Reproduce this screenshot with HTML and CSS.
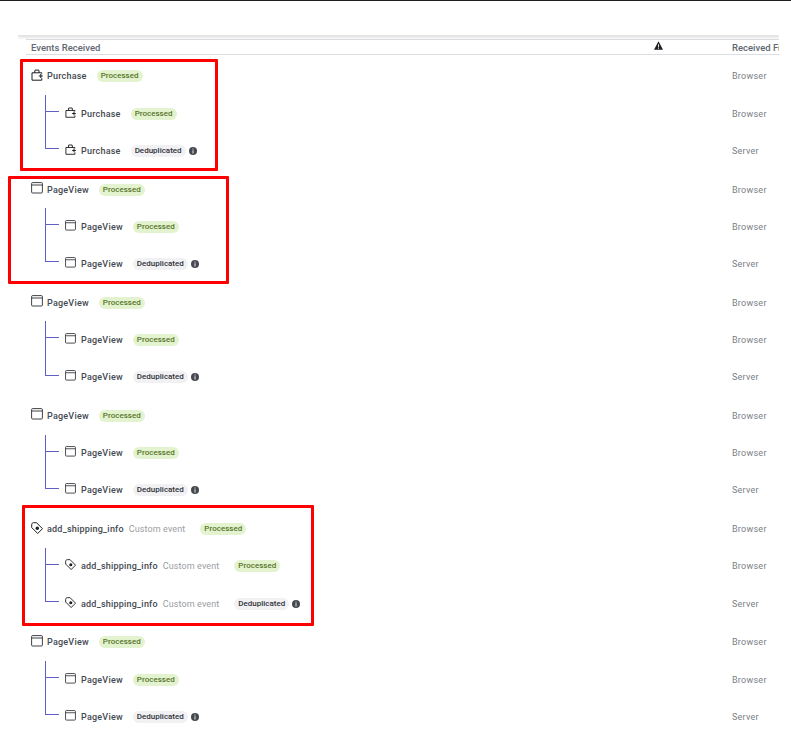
FILE: index.html
```html
<!DOCTYPE html>
<html lang="en">
<head>
<meta charset="utf-8">
<title>Events Received</title>
<link rel="stylesheet" href="styles.css">
</head>
<body>
<svg class="defs" width="0" height="0" aria-hidden="true">
  <defs>
    <symbol id="bag" viewBox="0 0 12 12">
      <path d="M1 3.800h9.800v7.400H1zM3.600 3.800 4 1.100h3.800l.4 2.700" fill="none" stroke="#1c1e21" stroke-width="1"/>
      <rect x="7.600" y="4.800" width="4.400" height="4.400" fill="#fff"/>
      <path d="M7.800 7h4M9.800 5v4" stroke="#1c1e21" stroke-width="1.100"/>
    </symbol>
    <symbol id="page" viewBox="0 0 12 12">
      <rect x=".6" y=".6" width="10.800" height="10.400" rx="1" fill="none" stroke="#2a2c30" stroke-width=".9"/>
      <path d="M.6 3h10.800" stroke="#2a2c30" stroke-width=".9"/>
    </symbol>
    <symbol id="tag" viewBox="0 0 12 12">
      <path d="M.7 2.600C.7 1.500 1.500.7 2.600.7h2.900l6 6-4.800 4.800-6-6z" fill="none" stroke="#1c1e21" stroke-width="1" stroke-linejoin="round"/>
      <circle cx="6.300" cy="6.300" r="1.700" fill="#1c1e21"/>
    </symbol>
    <symbol id="info" viewBox="0 0 8 8">
      <circle cx="4" cy="4" r="4" fill="#45484e"/>
      <path d="M3.500 1.500h1v1h-1zM3.500 3.300h1v3.200h-1z" fill="#e8e8e8"/>
    </symbol>
  </defs>
</svg>

<div class="topline"></div>
<div class="toolbar"><span class="tab-mark"></span></div>

<main class="table">
  <div class="head">
    <div class="head-title">Events Received</div>
    <svg class="warn" viewBox="0 0 8 8" aria-hidden="true"><path d="M4 .3 8 7.700H0z" fill="#1c1e21"/><path d="M3.600 2.800h.8v2.700h-.8zM3.600 6h.8v.8h-.8z" fill="#fff"/></svg>
    <div class="head-from">Received From</div>
  </div>

  <section class="group">
    <div class="row"><div class="cell"><svg class="ic"><use href="#bag"/></svg><b class="name">Purchase</b><span class="pill ok">Processed</span></div><div class="src">Browser</div></div>
    <div class="row child"><div class="cell"><svg class="ic"><use href="#bag"/></svg><b class="name">Purchase</b><span class="pill ok">Processed</span></div><div class="src">Browser</div></div>
    <div class="row child last"><div class="cell"><svg class="ic"><use href="#bag"/></svg><b class="name">Purchase</b><span class="pill dup">Deduplicated</span><svg class="inf"><use href="#info"/></svg></div><div class="src">Server</div></div>
  </section>

  <section class="group">
    <div class="row"><div class="cell"><svg class="ic"><use href="#page"/></svg><b class="name">PageView</b><span class="pill ok">Processed</span></div><div class="src">Browser</div></div>
    <div class="row child"><div class="cell"><svg class="ic"><use href="#page"/></svg><b class="name">PageView</b><span class="pill ok">Processed</span></div><div class="src">Browser</div></div>
    <div class="row child last"><div class="cell"><svg class="ic"><use href="#page"/></svg><b class="name">PageView</b><span class="pill dup">Deduplicated</span><svg class="inf"><use href="#info"/></svg></div><div class="src">Server</div></div>
  </section>

  <section class="group">
    <div class="row"><div class="cell"><svg class="ic"><use href="#page"/></svg><b class="name">PageView</b><span class="pill ok">Processed</span></div><div class="src">Browser</div></div>
    <div class="row child"><div class="cell"><svg class="ic"><use href="#page"/></svg><b class="name">PageView</b><span class="pill ok">Processed</span></div><div class="src">Browser</div></div>
    <div class="row child last"><div class="cell"><svg class="ic"><use href="#page"/></svg><b class="name">PageView</b><span class="pill dup">Deduplicated</span><svg class="inf"><use href="#info"/></svg></div><div class="src">Server</div></div>
  </section>

  <section class="group">
    <div class="row"><div class="cell"><svg class="ic"><use href="#page"/></svg><b class="name">PageView</b><span class="pill ok">Processed</span></div><div class="src">Browser</div></div>
    <div class="row child"><div class="cell"><svg class="ic"><use href="#page"/></svg><b class="name">PageView</b><span class="pill ok">Processed</span></div><div class="src">Browser</div></div>
    <div class="row child last"><div class="cell"><svg class="ic"><use href="#page"/></svg><b class="name">PageView</b><span class="pill dup">Deduplicated</span><svg class="inf"><use href="#info"/></svg></div><div class="src">Server</div></div>
  </section>

  <section class="group">
    <div class="row"><div class="cell"><svg class="ic"><use href="#tag"/></svg><b class="name">add_shipping_info</b><span class="custom">Custom event</span><span class="pill ok">Processed</span></div><div class="src">Browser</div></div>
    <div class="row child"><div class="cell"><svg class="ic"><use href="#tag"/></svg><b class="name">add_shipping_info</b><span class="custom">Custom event</span><span class="pill ok">Processed</span></div><div class="src">Browser</div></div>
    <div class="row child last"><div class="cell"><svg class="ic"><use href="#tag"/></svg><b class="name">add_shipping_info</b><span class="custom">Custom event</span><span class="pill dup">Deduplicated</span><svg class="inf"><use href="#info"/></svg></div><div class="src">Server</div></div>
  </section>

  <section class="group">
    <div class="row"><div class="cell"><svg class="ic"><use href="#page"/></svg><b class="name">PageView</b><span class="pill ok">Processed</span></div><div class="src">Browser</div></div>
    <div class="row child"><div class="cell"><svg class="ic"><use href="#page"/></svg><b class="name">PageView</b><span class="pill ok">Processed</span></div><div class="src">Browser</div></div>
    <div class="row child last"><div class="cell"><svg class="ic"><use href="#page"/></svg><b class="name">PageView</b><span class="pill dup">Deduplicated</span><svg class="inf"><use href="#info"/></svg></div><div class="src">Server</div></div>
  </section>
</main>

<div class="mark mark-1"></div>
<div class="mark mark-2"></div>
<div class="mark mark-3"></div>
</body>
</html>
```

FILE: styles.css
```css
* { box-sizing: border-box; }
html, body { margin: 0; padding: 0; }
body {
  position: relative;
  width: 791px;
  height: 756px;
  overflow: hidden;
  background: #fff;
  font-family: Roboto, "Liberation Sans", sans-serif;
  color: #4b4f56;
}
.defs { position: absolute; }
.topline { height: 1px; background: #1c1e21; }
.toolbar {
  height: 35px;
  margin-left: 18px;
  width: 761px;
  padding: 28px 0 0 70px;
  border-bottom: 1px solid #e4e4e4;
  box-shadow: 0 2px 2px rgba(0, 0, 0, .1);
  clip-path: inset(30px 0 -4px 0);
}
.tab-mark { display: block; width: 60px; height: 1px; background: #eeeef8; }
.table { width: 753px; margin: 3px 0 0 26px; overflow: hidden; }
.head {
  display: flex;
  align-items: center;
  height: 16px;
  padding-left: 5px;
  border-top: 1px solid #dadde1;
  border-bottom: 1px solid #dadde1;
  font-size: 9.500px;
  font-weight: 500;
  color: #606770;
  white-space: nowrap;
}
.head-title { flex: none; width: 623px; }
.warn { width: 9px; height: 9px; margin-top: -3px; flex: none; }
.head-from { flex: none; margin-left: 69px; }
.group { height: 113.200px; }
.group:first-of-type { margin-top: 2.800px; }
.row { position: relative; display: flex; align-items: center; height: 37.200px; padding-left: 5px; }
.cell { display: flex; align-items: center; flex: none; width: 701px; }
.ic { width: 12px; height: 12px; margin: -3px 4px 0 0; flex: none; }
.name { font-size: 9px; font-weight: 500; letter-spacing: .22px; color: #444950; }
.custom { font-size: 9px; color: #9a9da3; margin-left: 5px; letter-spacing: .1px; }
.pill {
  display: inline-block;
  height: 12px;
  line-height: 12px;
  padding: 0 4px;
  border-radius: 6px;
  font-size: 8px;
  font-weight: 500;
  margin-left: 10px;
}
.custom + .pill { margin-left: 15px; }
.ok { background: #e4f3cf; color: #56742a; }
.dup { background: #f1f1f4; color: #2f3238; }
.inf { width: 8px; height: 8px; margin-left: 3px; flex: none; }
.src { font-size: 9px; letter-spacing: .25px; color: #7a7e85; white-space: nowrap; }
.child .cell { padding-left: 34px; }
.child .ic { width: 11px; height: 11px; margin-right: 5px; }
.child::before {
  content: "";
  position: absolute;
  left: 19px;
  top: 0;
  width: 1px;
  height: 100%;
  background: #5b5fc7;
}
.child.last::before { height: 17px; }
.child::after {
  content: "";
  position: absolute;
  left: 19px;
  top: 16px;
  width: 14px;
  height: 1px;
  background: #5b5fc7;
}
.mark { position: absolute; border: 3px solid #f00; border-radius: 1px; }
.mark-1 { left: 20px; top: 59px; width: 198px; height: 112px; }
.mark-2 { left: 8px; top: 176px; width: 221px; height: 108px; }
.mark-3 { left: 22px; top: 505px; width: 292px; height: 121px; }
```
